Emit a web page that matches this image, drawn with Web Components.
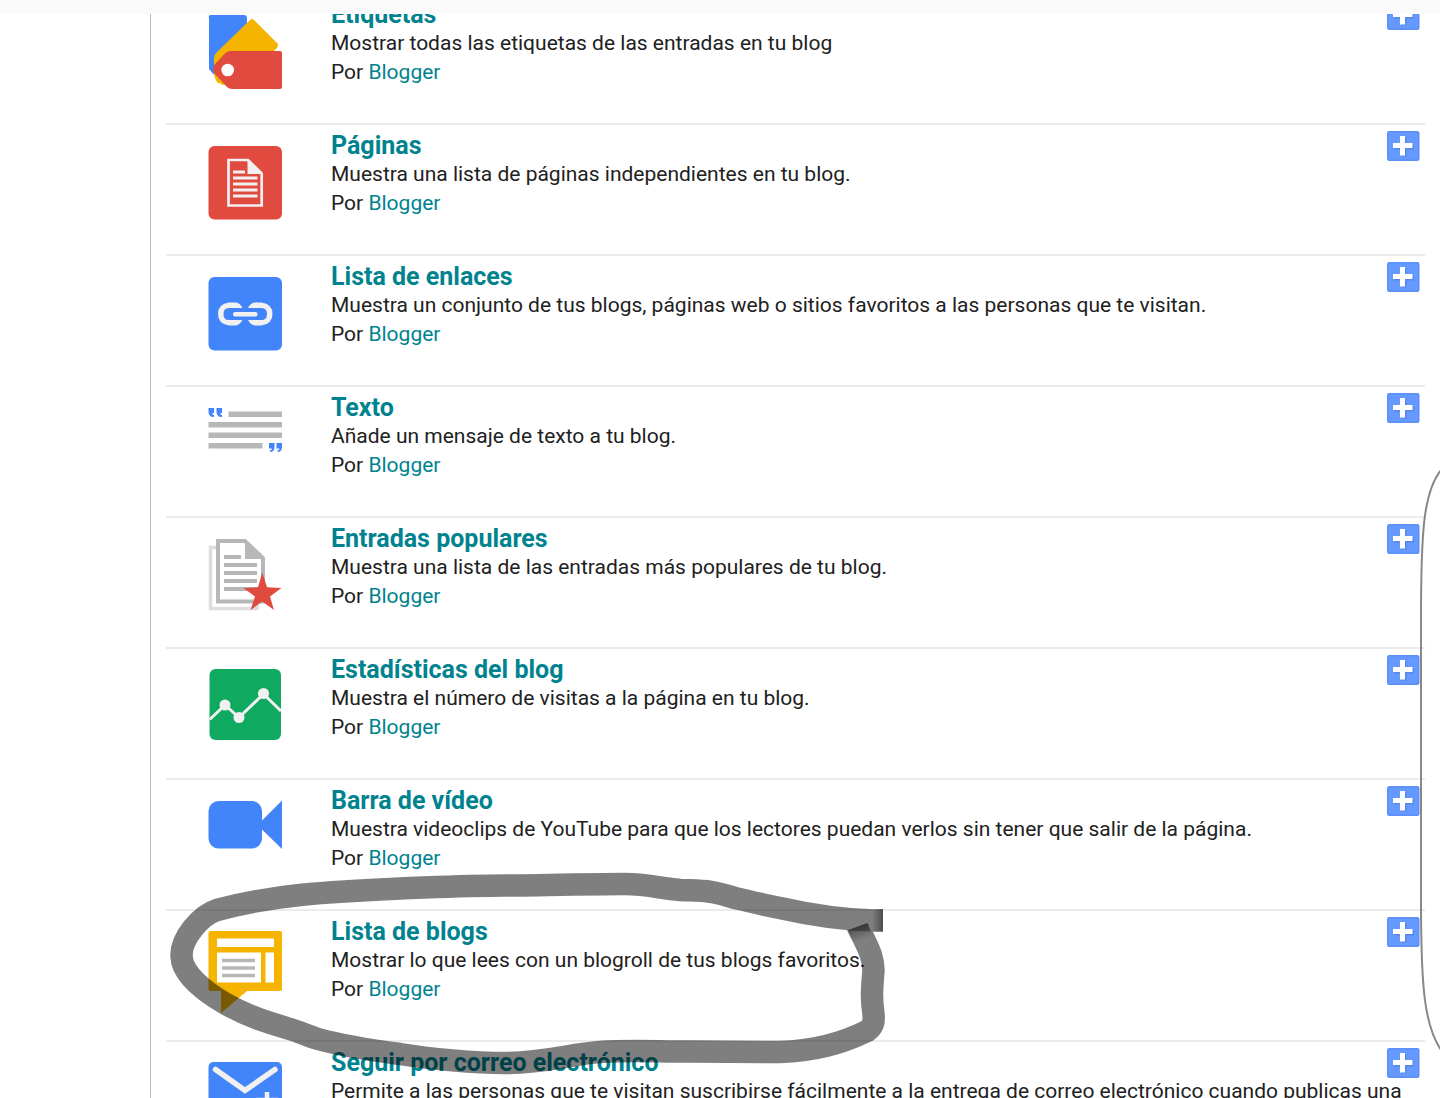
<!DOCTYPE html>
<html lang="es">
<head>
<meta charset="utf-8">
<meta name="viewport" content="width=device-width, initial-scale=1">
<title>Añadir un gadget</title>
<style>
  html, body { margin: 0; height: 100%; }
  body { overflow: hidden; background: #fff; color: #212121; font-family: Roboto, "Liberation Sans", sans-serif; }
</style>
</head>
<body>
<gadget-page>
  <gadget-item icon="tags" name="Etiquetas">Mostrar todas las etiquetas de las entradas en tu blog</gadget-item>
  <gadget-item icon="page" name="Páginas">Muestra una lista de páginas independientes en tu blog.</gadget-item>
  <gadget-item icon="link" name="Lista de enlaces">Muestra un conjunto de tus blogs, páginas web o sitios favoritos a las personas que te visitan.</gadget-item>
  <gadget-item icon="text" name="Texto">Añade un mensaje de texto a tu blog.</gadget-item>
  <gadget-item icon="popular" name="Entradas populares">Muestra una lista de las entradas más populares de tu blog.</gadget-item>
  <gadget-item icon="stats" name="Estadísticas del blog">Muestra el número de visitas a la página en tu blog.</gadget-item>
  <gadget-item icon="video" name="Barra de vídeo">Muestra videoclips de YouTube para que los lectores puedan verlos sin tener que salir de la página.</gadget-item>
  <gadget-item icon="blogs" name="Lista de blogs">Mostrar lo que lees con un blogroll de tus blogs favoritos.</gadget-item>
  <gadget-item icon="mail" name="Seguir por correo electrónico">Permite a las personas que te visitan suscribirse fácilmente a la entrega de correo electrónico cuando publicas una</gadget-item>
  <pen-mark slot="overlay"></pen-mark>
  <edge-panel slot="overlay"></edge-panel>
</gadget-page>

<script>
const icons = {
  tags: `<path fill="#4285fa" d="M3 0H36a3 3 0 0 1 3 3V30L7 61 1 54V3a2 2 0 0 1 2-3z"/>
    <path fill="#f4b400" d="M42 5q2-2 4 0L69 28q2 2 0 5L30 70H12Q7 66 6 59V43q0-3 2-5z"/>
    <path fill="#fff" d="M11 67.500L22 75H8z"/>
    <path fill="#e04a3f" d="M22 36H72a2 2 0 0 1 2 2V72a2 2 0 0 1-2 2H24q-3 0-5-2L7 59q-4-5 0-10L17 38.500q2-2.500 5-2.500z"/>
    <circle cx="19.700" cy="55" r="6.300" fill="#fff"/>`,
  page: `<rect x=".5" width="73.500" height="73.500" rx="6" fill="#e04a3f"/>
    <path fill="none" stroke="#f1efef" stroke-width="2.700" d="M20.500 14H40L53.700 27.500V59.500H20.500z"/>
    <path fill="#f1efef" d="M39.500 13L55 28H39.500z"/>
    <path stroke="#f1efef" stroke-width="2.800" d="M25 26H37M25 32H49.500M25 38H49.500M25 44H49.500M25 50H49.500"/>`,
  link: `<rect x=".5" width="73.500" height="73.500" rx="6" fill="#4285fa"/>
    <path fill="#f1f1f1" d="M21 25.500H28Q32 26 34.500 31H21Q15.500 31 15.500 37T21 43H34.500Q32 47.500 28 48.500H21Q10 47 10 37T21 25.500z"/>
    <path fill="#f1f1f1" d="M53.500 25.500H46.500Q42.500 26 40 31H53.500Q59 31 59 37T53.500 43H40Q42.500 47.500 46.500 48.500H53.500Q64.500 47 64.500 37T53.500 25.500z"/>
    <rect x="25" y="35" width="24.500" height="4.500" rx="2" fill="#f1f1f1"/>`,
  text: `<path fill="#b7b7b7" d="M20.500 3.500H74V9H20.500zM.5 14H74V19.500H.5zM.5 24.500H74V30H.5zM.5 35H54.500V40.500H.5z"/>
    <path fill="#4285fa" d="M.5 0H6V5H4.500Q4 7 6 7V9Q.5 9 .5 4zM8.500 0H14V5H12.500Q12 7 14 7V9Q8.500 9 8.500 4zM61 35H66.500V39Q66.500 44 62 44V42.500Q64 42 64 40.500H61zM68.500 35H74V39Q74 44 69.500 44V42.500Q71.500 42 71.500 40.500H68.500z"/>`,
  popular: `<path fill="none" stroke="#ddd" stroke-width="3.500" d="M8 8.500H2.500V69.500H49V64"/>
    <path fill="#fff" stroke="#b7b7b7" stroke-width="4" d="M10 2H37L55 19V62.500H10z"/>
    <path fill="#b7b7b7" d="M37 0L57 20H37z"/>
    <path stroke="#b7b7b7" stroke-width="4" d="M16 18H33M16 26H49M16 34H49M16 42H49M16 50H49"/>
    <path fill="#e04a3f" d="M54.300 33.500L59 48.300 73.500 49 62 57.500 66 71 54.300 62.500 42.600 71 47 57.500 35.500 49 50 48.300z"/>`,
  stats: `<rect x="1.500" y="-1" width="71.500" height="71" rx="6" fill="#0fa95f"/>
    <path fill="none" stroke="#f1f1f1" stroke-width="3" d="M1.700 49.500L17 35 31 47.500 55.500 24 73 41"/>
    <g fill="#f1f1f1"><circle cx="17" cy="35" r="5.500"/><circle cx="31" cy="47.500" r="5.500"/><circle cx="55.500" cy="23.500" r="5.500"/></g>`,
  video: `<rect x=".5" width="53.500" height="47.500" rx="10" fill="#4285fa"/><path fill="#4285fa" d="M53.500 20L74-.5V48L53.500 28z"/>`,
  blogs: `<path fill="#f4b400" d="M2.500-1H72a2 2 0 0 1 2 2V57a2 2 0 0 1-2 2H39L13 81V59H2.500a2 2 0 0 1-2-2V1a2 2 0 0 1 2-2z"/>
    <path fill="#fff" d="M9 6.500H66V15H9zM9 20.500H53V50.500H9zM57.500 20.500H66V50.500H57.500z"/>
    <path stroke="#b7b7b7" stroke-width="3.500" d="M14 28.500H47M14 36H47M14 43.500H47"/>`,
  mail: `<rect x=".5" y="-1" width="73.500" height="74" rx="5" fill="#4285fa"/>
    <path fill="none" stroke="#f1f1f1" stroke-width="5.500" stroke-linecap="round" d="M7.500 6.500L37 27.500 67 6.500"/>
    <path stroke="#f1f1f1" stroke-width="4.500" d="M59 29V51M48 37H70"/>`
};

customElements.define('gadget-icon', class extends HTMLElement {
  connectedCallback() {
    this.attachShadow({ mode: 'open' }).innerHTML = `
      <style>:host { display: block; } svg { display: block; width: 74px; height: 74px; overflow: visible; }</style>
      <svg viewBox="0 0 74 74" aria-hidden="true">${icons[this.getAttribute('kind')]}</svg>`;
  }
});

customElements.define('add-button', class extends HTMLElement {
  connectedCallback() {
    this.attachShadow({ mode: 'open' }).innerHTML = `
      <style>
        :host { display: block; }
        button { display: block; width: 33px; height: 30px; padding: 0; border: 0; background: none; cursor: pointer; }
        svg { display: block; }
      </style>
      <button type="button" aria-label="${this.getAttribute('label')}">
        <svg width="33" height="30" viewBox="0 0 33 30">
          <rect x=".75" y=".75" width="31" height="28.500" rx="1.500" fill="#6699ff" stroke="#5a90f8" stroke-width="1.500"/>
          <path stroke="#4776cc" stroke-opacity=".5" stroke-width="5" d="M7.500 16H27M17 6.500V25.500"/>
          <path stroke="#fff" stroke-width="5" d="M6 14.500H25.500M15.500 5V24.500"/>
        </svg>
      </button>`;
  }
});

customElements.define('gadget-item', class extends HTMLElement {
  connectedCallback() {
    const name = this.getAttribute('name');
    this.attachShadow({ mode: 'open' }).innerHTML = `
      <style>
        :host { display: block; border-top: 2px solid #ebebeb; }
        article { display: flex; align-items: flex-start; padding: 6px 5px 36px 42px; }
        gadget-icon { flex: none; height: 72px; margin-top: 15px; margin-right: 49px; }
        .info { flex: 1; min-width: 0; }
        add-button { float: right; height: 28px; margin-left: 8px; }
        h2, p { margin: 0; line-height: 29px; }
        h2 { font-size: 25px; font-weight: 700; }
        p { font-size: 21px; }
        a { color: #00838f; text-decoration: none; }
      </style>
      <article>
        <gadget-icon kind="${this.getAttribute('icon')}"></gadget-icon>
        <div class="info">
          <add-button label="Añadir ${name}"></add-button>
          <h2><a href="#">${name}</a></h2>
          <p><slot></slot></p>
          <p>Por <a href="#">Blogger</a></p>
        </div>
      </article>`;
  }
});

customElements.define('pen-mark', class extends HTMLElement {
  connectedCallback() {
    this.attachShadow({ mode: 'open' }).innerHTML = `
      <style>:host { display: block; position: absolute; left: 0; top: 0; pointer-events: none; } svg { display: block; }</style>
      <svg width="900" height="1098" viewBox="0 0 900 1098" aria-hidden="true">
        <defs>
          <linearGradient id="tip" x1="872" x2="883" y1="0" y2="0" gradientUnits="userSpaceOnUse"><stop stop-opacity="0"/><stop offset="1" stop-opacity=".4"/></linearGradient>
          <linearGradient id="start" x1="857" y1="925" x2="862" y2="940" gradientUnits="userSpaceOnUse"><stop stop-opacity=".4"/><stop offset="1" stop-opacity="0"/></linearGradient>
        </defs>
        <path fill="none" stroke="#000" stroke-opacity=".5" stroke-width="22.500" stroke-linejoin="round"
          d="M883 920.500H874C850 920 820 917 780 908C755 903 745 900 735 898C710 890 705 891 680 890C655 888 650 884 625 884C590 884 550 885 515 885.500C475 885 440 887 400 888.500C365 890 330 892 300 895C270 898 240 904 217 910C201 915 181 938 181.500 956C182 974 205 992 226 1004C249 1017 270 1023 290 1029C300 1032 308 1036 318 1039C340 1045 370 1050 400 1054C430 1059 475 1063 505 1063C545 1063 570 1054 600 1052C630 1050 655 1051.500 690 1051.500C730 1051.500 755 1052 780 1052C815 1051 845 1042 867 1031C874 1026 874 1021 873.500 1014C871 997 872 990 873.500 970C873 953 866 945 858 926"/>
        <path fill="url(#tip)" d="M872 909H883V931.500H872z"/>
        <path fill="url(#start)" d="M847 930.500L867.500 923 875 941 854 947z"/>
        <path fill-opacity=".3" d="M847 930.500L867.500 923 871 931.500z"/>
      </svg>`;
  }
});

customElements.define('edge-panel', class extends HTMLElement {
  connectedCallback() {
    this.attachShadow({ mode: 'open' }).innerHTML = `
      <style>:host { display: block; position: absolute; right: 0; top: 460px; pointer-events: none; } svg { display: block; }</style>
      <svg width="22" height="600" viewBox="1418 460 22 600" aria-hidden="true">
        <path fill="none" stroke="#888" stroke-width="2" d="M1441 470C1423 492 1421 535 1421 620V900C1421 985 1424 1025 1441 1050"/>
      </svg>`;
  }
});

customElements.define('gadget-page', class extends HTMLElement {
  connectedCallback() {
    this.attachShadow({ mode: 'open' }).innerHTML = `
      <style>
        :host { display: flex; flex-direction: column; position: relative; height: 100vh; overflow: hidden; }
        header { flex: none; height: 14px; background: #fafafa; }
        main { flex: 1; min-height: 0; overflow: hidden; margin-left: 150px; border-left: 1px solid #bbb; padding: 0 15px; }
        .list { margin-top: -22px; }
      </style>
      <header></header>
      <main><div class="list"><slot></slot></div></main>
      <slot name="overlay"></slot>`;
  }
});
</script>
</body>
</html>
